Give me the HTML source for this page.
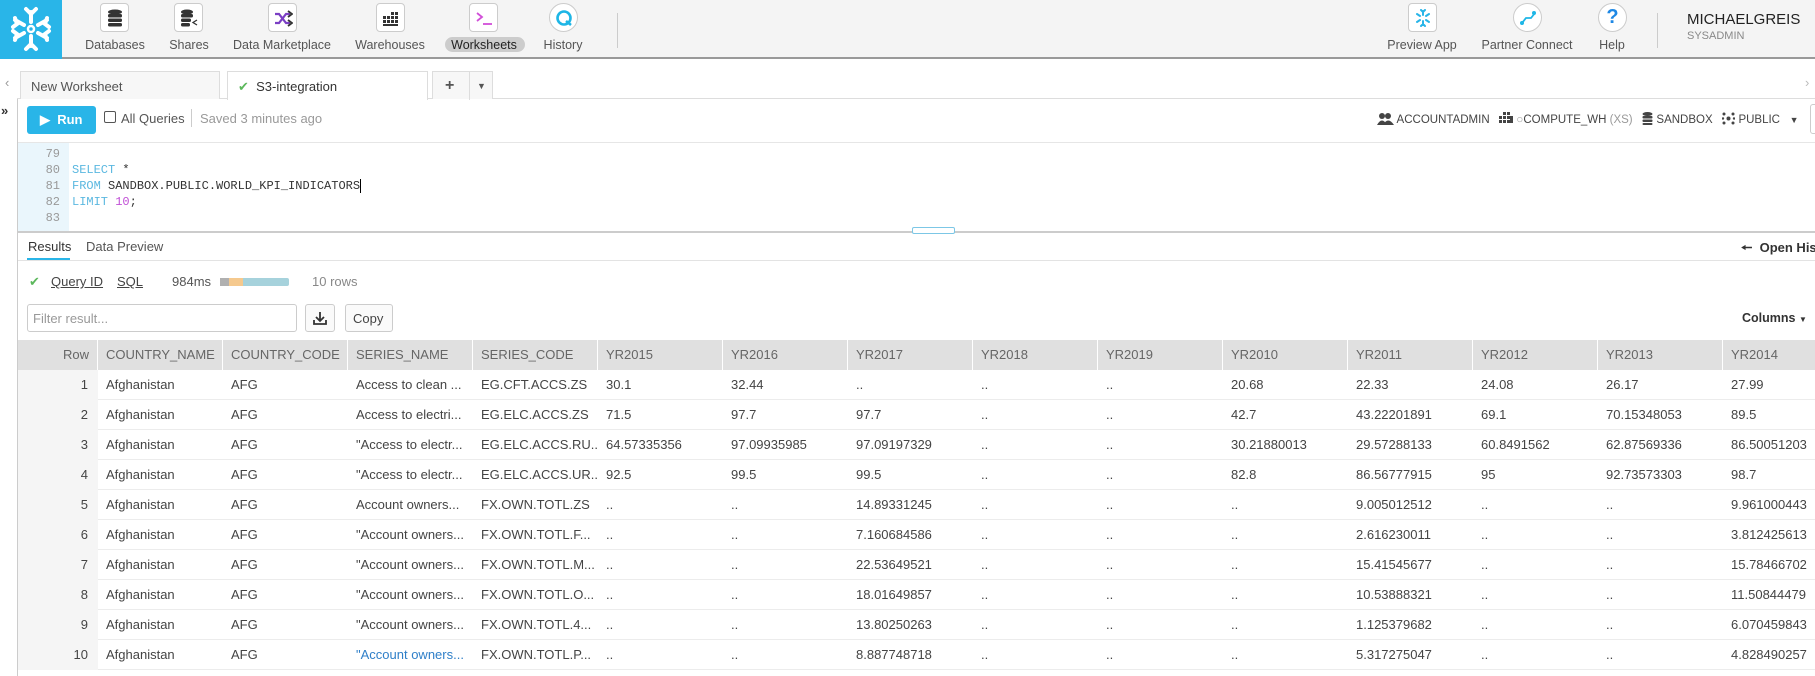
<!DOCTYPE html>
<html><head><meta charset="utf-8"><style>
*{box-sizing:border-box;margin:0;padding:0}
body{width:1815px;height:676px;overflow:hidden;background:#fff;font-family:"Liberation Sans",sans-serif;color:#333;position:relative}
.a{position:absolute;white-space:nowrap}
.nav{position:absolute;left:0;top:0;width:1815px;height:59px;background:#f4f4f4;border-bottom:2px solid #999}
.ib{position:absolute;top:3px;width:29px;height:29px;border:1px solid #ccc;border-radius:4px;background:#fff;display:flex;align-items:center;justify-content:center}
.lab{position:absolute;top:38px;font-size:12.5px;color:#555;transform:translateX(-50%)}
.tab{position:absolute;top:71px;height:28px;border:1px solid #ddd;border-bottom:none;background:#f7f7f7;font-size:13px;padding:7px 10px;color:#555}
.th,.td{position:absolute;font-size:13px;padding-left:8px;line-height:30px;white-space:nowrap;overflow:hidden}
.th{background:#e0e0e0;color:#666;height:30px;top:340px}
.td{color:#444}
</style></head><body>
<div class="nav">
 <div class="a" style="left:0;top:0;width:62px;height:59px;background:#29b5e8">
  <svg width="62" height="59" viewBox="0 0 62 59"><g stroke="#fff" stroke-width="4" stroke-linecap="round" fill="none">
  <path d="M31 12v10M26 9l5 5 5-5M31 46v-10M26 49l5-5 5 5"/>
  <path d="M15 20l9 5M13 27l4-3-2-6M47 20l-9 5M49 27l-4-3 2-6"/>
  <path d="M15 38l9-5M13 31l4 3-2 6M47 38l-9-5M49 31l-4 3 2 6"/>
  </g><circle cx="31" cy="29" r="3" fill="none" stroke="#fff" stroke-width="2.5"/></svg>
 </div>
 <div class="ib" style="left:100px"><svg width="16" height="18"><ellipse cx="8" cy="3" rx="7" ry="2.5" fill="#333"/><rect x="1" y="5" width="14" height="3.5" rx="1.5" fill="#333"/><rect x="1" y="9.5" width="14" height="3.5" rx="1.5" fill="#333"/><rect x="1" y="14" width="14" height="3.5" rx="1.5" fill="#333"/></svg></div>
 <div class="lab" style="left:115px">Databases</div>
 <div class="ib" style="left:174px"><svg width="18" height="18"><ellipse cx="7" cy="3" rx="6" ry="2.5" fill="#333"/><rect x="1" y="5" width="12" height="3.5" rx="1.5" fill="#333"/><rect x="1" y="9.5" width="10" height="3.5" rx="1.5" fill="#333"/><rect x="1" y="14" width="9" height="3.5" rx="1.5" fill="#333"/><path d="M17 11l-4 2.5 4 2.5" stroke="#333" fill="none" stroke-width="1.3"/></svg></div>
 <div class="lab" style="left:189px">Shares</div>
 <div class="ib" style="left:268px"><svg width="20" height="18"><path d="M2 5h4l7 9h4M2 14h4l7-9h4" stroke="#7b3fc4" stroke-width="2.2" fill="none"/><path d="M15 2l4 3-4 3M15 11l4 3-4 3" stroke="#333" stroke-width="1.8" fill="none"/></svg></div>
 <div class="lab" style="left:282px">Data Marketplace</div>
 <div class="ib" style="left:376px"><svg width="18" height="16" fill="#333"><rect x="1" y="6" width="3" height="3"/><rect x="5" y="6" width="3" height="3"/><rect x="9" y="2" width="3" height="3"/><rect x="13" y="2" width="3" height="3"/><rect x="1" y="10" width="3" height="3"/><rect x="5" y="10" width="3" height="3"/><rect x="9" y="6" width="3" height="3"/><rect x="13" y="6" width="3" height="3"/><rect x="9" y="10" width="3" height="3"/><rect x="13" y="10" width="3" height="3"/><rect x="1" y="14" width="15" height="2"/></svg></div>
 <div class="lab" style="left:390px">Warehouses</div>
 <div class="ib" style="left:469px"><svg width="18" height="16"><path d="M2 3l5 4-5 4" stroke="#d14fd8" stroke-width="1.8" fill="none"/><path d="M8 14h9" stroke="#d14fd8" stroke-width="1.8"/></svg></div>
 <div class="a" style="left:445px;top:37px;width:80px;height:15px;background:#ccc;border-radius:8px"></div>
 <div class="lab" style="left:484px;color:#222">Worksheets</div>
 <div class="ib" style="left:549px;border-radius:50%"><svg width="20" height="20"><circle cx="10" cy="10" r="6.5" stroke="#1eb6e6" stroke-width="2.6" fill="none"/><path d="M12 13l5 4" stroke="#1eb6e6" stroke-width="2.6"/></svg></div>
 <div class="lab" style="left:563px">History</div>
 <div class="a" style="left:617px;top:13px;width:1px;height:35px;background:#ccc"></div>
 <div class="ib" style="left:1408px"><svg width="18" height="18"><g stroke="#29b5e8" stroke-width="2" stroke-linecap="round" fill="none"><path d="M9 2v4M7 1l2 2 2-2M9 16v-4M7 17l2-2 2 2M3 5l3 2M15 5l-3 2M3 13l3-2M15 13l-3-2"/></g></svg></div>
 <div class="lab" style="left:1422px">Preview App</div>
 <div class="ib" style="left:1513px;border-radius:50%"><svg width="18" height="18"><path d="M3 14l4-5 5 0 4-5" stroke="#1eb6e6" stroke-width="1.8" fill="none"/><circle cx="3" cy="14" r="2" fill="#1eb6e6"/><circle cx="15" cy="4" r="2" fill="#1eb6e6"/></svg></div>
 <div class="lab" style="left:1527px">Partner Connect</div>
 <div class="ib" style="left:1598px;border-radius:50%;color:#1e88e5;font-size:20px;font-weight:bold">?</div>
 <div class="lab" style="left:1612px">Help</div>
 <div class="a" style="left:1657px;top:13px;width:1px;height:35px;background:#ccc"></div>
 <div class="a" style="left:1687px;top:11px;font-size:15px;color:#222">MICHAELGREIS</div>
 <div class="a" style="left:1687px;top:30px;font-size:11px;color:#888">SYSADMIN</div>
</div>
<div class="a" style="left:5px;top:75px;font-size:13px;color:#999">‹</div>
<div class="a" style="left:1805px;top:75px;font-size:13px;color:#bbb">›</div>
<div class="a" style="left:1px;top:103px;font-size:13px;color:#333;font-weight:bold">»</div>
<div class="a" style="left:17px;top:99px;width:1px;height:577px;background:#ccc"></div>
<div class="a" style="left:17px;top:98px;width:1798px;height:1px;background:#ddd"></div>
<div class="tab" style="left:20px;width:200px">New Worksheet</div>
<div class="tab" style="left:227px;width:201px;background:#fff;height:29px;color:#333"><span style="color:#5cb85c">✔</span>&nbsp; S3-integration</div>
<div class="tab" style="left:432px;width:61px;padding:4px 0"><span style="position:absolute;left:12px;top:5px;font-size:16px;font-weight:bold">+</span><span style="position:absolute;left:36px;top:0;width:1px;height:28px;background:#ddd"></span><span style="position:absolute;left:44px;top:9px;font-size:9px">▼</span></div>
<div class="a" style="left:27px;top:106px;width:69px;height:28px;background:#29b5e8;border-radius:3px;color:#fff;font-size:13px;font-weight:bold;line-height:28px;padding-left:13px">▶&nbsp; Run</div>
<div class="a" style="left:104px;top:111px;width:12px;height:12px;border:1px solid #555;border-radius:2px"></div>
<div class="a" style="left:121px;top:111px;font-size:13px;color:#555">All Queries</div>
<div class="a" style="left:191px;top:109px;width:1px;height:18px;background:#ccc"></div>
<div class="a" style="left:200px;top:111px;font-size:13px;color:#999">Saved 3 minutes ago</div>
<div class="a" style="left:1377px;top:112px;font-size:11.5px;color:#444">
 <svg width="17" height="13" style="vertical-align:-2px"><circle cx="5" cy="4" r="3" fill="#444"/><circle cx="11" cy="4" r="3" fill="#444"/><path d="M0 13q5-9 10 0zM6 13q5-9 11 0z" fill="#444"/></svg> ACCOUNTADMIN
 &nbsp;&nbsp;<svg width="14" height="13" fill="#444" style="vertical-align:-2px"><rect x="0" y="4" width="3" height="3"/><rect x="4" y="0" width="3" height="3"/><rect x="8" y="0" width="3" height="3"/><rect x="4" y="4" width="3" height="3"/><rect x="8" y="4" width="3" height="3"/><rect x="0" y="8" width="3" height="3"/><rect x="4" y="8" width="3" height="3"/><rect x="8" y="8" width="3" height="3"/><rect x="11" y="4" width="3" height="7"/></svg> <span style="color:#999">○</span>COMPUTE_WH <span style="color:#999">(XS)</span>
 &nbsp;&nbsp;<svg width="11" height="13" fill="#444" style="vertical-align:-2px"><ellipse cx="5.5" cy="2" rx="5" ry="2"/><rect x="0.5" y="4" width="10" height="2.5" rx="1"/><rect x="0.5" y="7.5" width="10" height="2.5" rx="1"/><rect x="0.5" y="11" width="10" height="2" rx="1"/></svg> SANDBOX
 &nbsp;&nbsp;<svg width="13" height="13" fill="#444" style="vertical-align:-2px"><circle cx="6.5" cy="6.5" r="2"/><circle cx="2" cy="2" r="1.5"/><circle cx="11" cy="2" r="1.5"/><circle cx="2" cy="11" r="1.5"/><circle cx="11" cy="11" r="1.5"/><circle cx="1" cy="6.5" r="1.2"/><circle cx="12" cy="6.5" r="1.2"/></svg> PUBLIC &nbsp;&nbsp;<span style="font-size:9px">▼</span></div>
<div class="a" style="left:1810px;top:104px;width:10px;height:30px;border:1px solid #ccc;border-radius:3px"></div>
<div class="a" style="left:18px;top:142px;width:1797px;height:1px;background:#e6e6e6"></div>
<div class="a" style="left:18px;top:143px;width:51px;height:88px;background:#eaf6fc"></div>
<div class="a" style="left:18px;top:146px;width:42px;font-family:'Liberation Mono',monospace;font-size:12px;line-height:16px;color:#999;text-align:right">79<br>80<br>81<br>82<br>83</div>
<div class="a" style="left:72px;top:146px;font-family:'Liberation Mono',monospace;font-size:12px;line-height:16px;color:#333"><br><span style="color:#5bb8e0">SELECT</span> *<br><span style="color:#5bb8e0">FROM</span> SANDBOX.PUBLIC.WORLD_KPI_INDICATORS<span style="border-left:1px solid #000"></span><br><span style="color:#5bb8e0">LIMIT</span> <span style="color:#c150d6">10</span>;</div>
<div class="a" style="left:18px;top:231px;width:1797px;height:2px;background:#ccc"></div>
<div class="a" style="left:912px;top:227px;width:43px;height:7px;border:1px solid #7cc7e6;border-radius:2px;background:#fff"></div>
<div class="a" style="left:28px;top:239px;font-size:13px;color:#333">Results</div>
<div class="a" style="left:27px;top:258px;width:43px;height:2px;background:#29b5e8"></div>
<div class="a" style="left:86px;top:239px;font-size:13px;color:#555">Data Preview</div>
<div class="a" style="left:18px;top:260px;width:1797px;height:1px;background:#e3e3e3"></div>
<div class="a" style="left:1741px;top:239px;font-size:13px;color:#333;font-weight:bold">🠔&nbsp; Open His</div>
<div class="a" style="left:29px;top:274px;font-size:13px;color:#5cb85c">✔</div>
<div class="a" style="left:51px;top:274px;font-size:13px;color:#444;text-decoration:underline">Query ID</div>
<div class="a" style="left:117px;top:274px;font-size:13px;color:#444;text-decoration:underline">SQL</div>
<div class="a" style="left:172px;top:274px;font-size:13px;color:#555">984ms</div>
<div class="a" style="left:220px;top:278px;width:69px;height:8px;background:#a6d2dc;border-radius:2px"><div style="position:absolute;left:0;width:9px;height:8px;background:#b0b0b0"></div><div style="position:absolute;left:9px;width:14px;height:8px;background:#f5c98e"></div></div>
<div class="a" style="left:312px;top:274px;font-size:13px;color:#888">10 rows</div>
<div class="a" style="left:27px;top:304px;width:270px;height:28px;border:1px solid #ccc;border-radius:3px;font-size:13px;color:#999;padding:6px 5px">Filter result...</div>
<div class="a" style="left:305px;top:304px;width:30px;height:28px;border:1px solid #ccc;border-radius:3px;background:#fafafa"><svg width="28" height="26"><path d="M14 7v9M10 12l4 4 4-4M8 15v4h12v-4" stroke="#333" stroke-width="1.8" fill="none"/></svg></div>
<div class="a" style="left:345px;top:304px;width:48px;height:28px;border:1px solid #ccc;border-radius:3px;background:#fafafa;font-size:13px;color:#444;padding:6px 7px">Copy</div>
<div class="a" style="left:1742px;top:311px;font-size:12.5px;color:#333;font-weight:bold">Columns <span style="font-size:8px">▼</span></div>
<div id="t"></div>
<script>
var cols=["COUNTRY_NAME","COUNTRY_CODE","SERIES_NAME","SERIES_CODE","YR2015","YR2016","YR2017","YR2018","YR2019","YR2010","YR2011","YR2012","YR2013","YR2014"];
var rows=[
["Afghanistan","AFG","Access to clean ...","EG.CFT.ACCS.ZS","30.1","32.44","..","..","..","20.68","22.33","24.08","26.17","27.99"],
["Afghanistan","AFG","Access to electri...","EG.ELC.ACCS.ZS","71.5","97.7","97.7","..","..","42.7","43.22201891","69.1","70.15348053","89.5"],
["Afghanistan","AFG","\"Access to electr...","EG.ELC.ACCS.RU...","64.57335356","97.09935985","97.09197329","..","..","30.21880013","29.57288133","60.8491562","62.87569336","86.50051203"],
["Afghanistan","AFG","\"Access to electr...","EG.ELC.ACCS.UR...","92.5","99.5","99.5","..","..","82.8","86.56777915","95","92.73573303","98.7"],
["Afghanistan","AFG","Account owners...","FX.OWN.TOTL.ZS","..","..","14.89331245","..","..","..","9.005012512","..","..","9.961000443"],
["Afghanistan","AFG","\"Account owners...","FX.OWN.TOTL.F...","..","..","7.160684586","..","..","..","2.616230011","..","..","3.812425613"],
["Afghanistan","AFG","\"Account owners...","FX.OWN.TOTL.M...","..","..","22.53649521","..","..","..","15.41545677","..","..","15.78466702"],
["Afghanistan","AFG","\"Account owners...","FX.OWN.TOTL.O...","..","..","18.01649857","..","..","..","10.53888321","..","..","11.50844479"],
["Afghanistan","AFG","\"Account owners...","FX.OWN.TOTL.4...","..","..","13.80250263","..","..","..","1.125379682","..","..","6.070459843"],
["Afghanistan","AFG","\"Account owners...","FX.OWN.TOTL.P...","..","..","8.887748718","..","..","..","5.317275047","..","..","4.828490257"]];
var h='<div class="th" style="left:18px;width:79px;text-align:right;padding-right:8px">Row</div>';
for(var i=0;i<cols.length;i++){var x=98+i*125;h+='<div class="th" style="left:'+x+'px;width:'+(i==13?96:124)+'px">'+cols[i]+'</div>';}
for(var r=0;r<10;r++){var y=370+r*30;
h+='<div class="td" style="left:18px;top:'+y+'px;width:80px;height:30px;background:#f5f5f5;text-align:right;padding-right:10px">'+(r+1)+'</div>';
h+='<div class="a" style="left:98px;top:'+(y+29)+'px;width:1717px;height:1px;background:#ececec"></div>';
for(var i=0;i<14;i++){var x=98+i*125;var c=(r==9&&i==2)?';color:#2f7fc8':'';
h+='<div class="td" style="left:'+x+'px;top:'+y+'px;width:'+(i==13?96:124)+'px'+c+'">'+rows[r][i]+'</div>';}}
document.getElementById('t').innerHTML=h;
</script>
</body></html>
